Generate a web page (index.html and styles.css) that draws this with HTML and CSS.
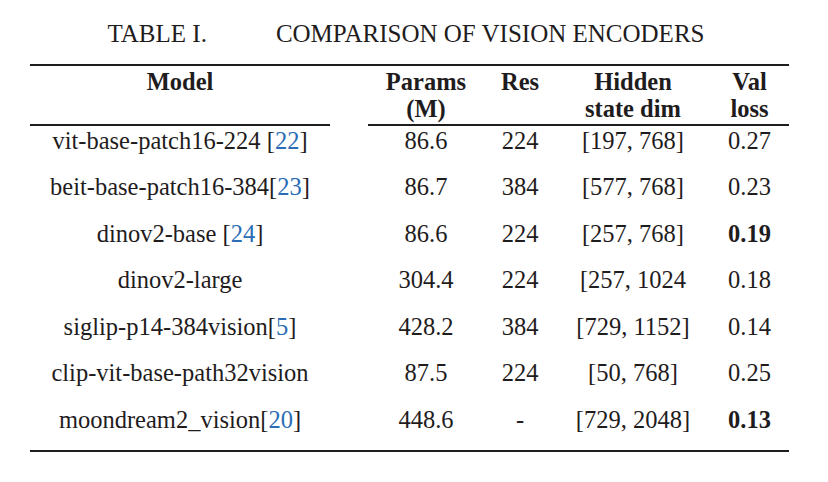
FILE: index.html
```html
<!DOCTYPE html>
<html lang="en">
<head>
<meta charset="utf-8">
<title>Comparison of Vision Encoders</title>
<link rel="stylesheet" href="styles.css">
</head>
<body>
<div class="page">
  <div class="caption"><span class="label">TABLE I.</span><span class="ctitle">COMPARISON OF VISION ENCODERS</span></div>
  <div class="table">
    <div class="head">
      <div class="th rule">Model</div>
      <div class="th gap"></div>
      <div class="th rule">Params<br>(M)</div>
      <div class="th rule">Res</div>
      <div class="th rule">Hidden<br>state dim</div>
      <div class="th rule">Val<br>loss</div>
    </div>
    <div class="body">
      <div class="td">vit-base-patch16-224 [<span class="ref">22</span>]</div><div class="td"></div><div class="td">86.6</div><div class="td">224</div><div class="td">[197, 768]</div><div class="td">0.27</div>
      <div class="td">beit-base-patch16-384[<span class="ref">23</span>]</div><div class="td"></div><div class="td">86.7</div><div class="td">384</div><div class="td">[577, 768]</div><div class="td">0.23</div>
      <div class="td">dinov2-base [<span class="ref">24</span>]</div><div class="td"></div><div class="td">86.6</div><div class="td">224</div><div class="td">[257, 768]</div><div class="td best">0.19</div>
      <div class="td">dinov2-large</div><div class="td"></div><div class="td">304.4</div><div class="td">224</div><div class="td">[257, 1024</div><div class="td">0.18</div>
      <div class="td">siglip-p14-384vision[<span class="ref">5</span>]</div><div class="td"></div><div class="td">428.2</div><div class="td">384</div><div class="td">[729, 1152]</div><div class="td">0.14</div>
      <div class="td">clip-vit-base-path32vision</div><div class="td"></div><div class="td">87.5</div><div class="td">224</div><div class="td">[50, 768]</div><div class="td">0.25</div>
      <div class="td">moondream2_vision[<span class="ref">20</span>]</div><div class="td"></div><div class="td">448.6</div><div class="td">-</div><div class="td">[729, 2048]</div><div class="td best">0.13</div>
    </div>
  </div>
</div>
</body>
</html>
```
FILE: styles.css
```css
html, body {
  margin: 0;
  padding: 0;
  background: #ffffff;
}
.page {
  width: 828px;
  height: 482px;
  font-family: "Liberation Serif", "Times New Roman", serif;
  font-size: 24.5px;
  color: #1f1c1d;
  padding-top: 20px;
  box-sizing: border-box;
}
.caption {
  display: flex;
  justify-content: center;
  font-size: 25px;
  line-height: 28px;
  height: 28px;
  padding-right: 16px;
}
.caption .label {
  margin-right: 69px;
}
.table {
  margin-top: 16px;
  margin-left: 30px;
  width: 759px;
  border-top: 2px solid #1f1c1d;
  border-bottom: 2px solid #1f1c1d;
}
.head, .body {
  display: grid;
  grid-template-columns: 300px 38px 116px 72px 154px 79px;
}
.th {
  font-weight: bold;
  text-align: center;
  line-height: 27px;
  padding-top: 2px;
  padding-bottom: 2px;
}
.th.rule {
  border-bottom: 2.5px solid #1f1c1d;
}
.body {
  row-gap: 18.6px;
  padding-top: 0.5px;
  padding-bottom: 16px;
}
.td {
  text-align: center;
  line-height: 28px;
  white-space: nowrap;
}
.ref {
  color: #2a6db5;
}
.best {
  font-weight: bold;
}
```
